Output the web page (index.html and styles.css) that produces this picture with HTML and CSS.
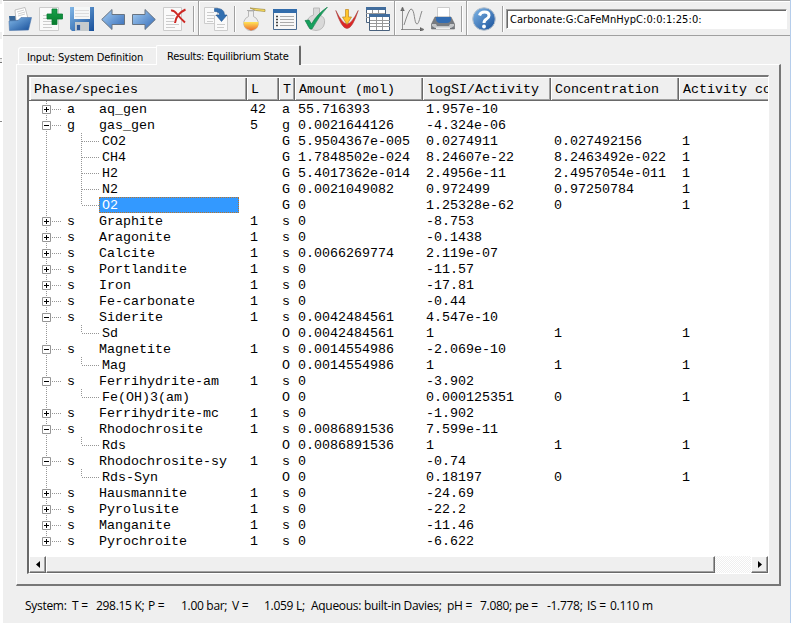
FILE: index.html
```html
<!DOCTYPE html>
<html lang="en">
<head>
<meta charset="utf-8">
<title>Equilibrium results</title>
<link rel="stylesheet" href="styles.css">
</head>
<body>
<div class="edge"><i class="e1"></i><i class="e2"></i><i class="e3"></i><i class="e4"></i></div>
<div class="window">
<header class="toolbar">
  <div class="group g1">
    <svg viewBox="0 0 24 24"><path d="M1 9h6l2-1h8l2 2v9H2z" fill="#376799"/><path d="M7 3l10-2.500 3 11-12 2z" fill="#fff" stroke="#aaa" stroke-width=".7"/><path d="M9 5l7-2M10 7l7-2M10 9l7-2" stroke="#bbb" stroke-width=".7"/><path d="M1 14l9-.5 3-3h10.500l-3 12.500-19 .5z" fill="url(#blue)" stroke="#4d76aa" stroke-width=".6"/></svg>
    <svg viewBox="0 0 24 24"><path d="M.5.5h19v23H.5z" fill="#fafafa" stroke="#ccc"/><path d="M4 8.500h5M4 11.500h9M4 14.500h9M4 17.500h12M4 20.500h9" stroke="#ccc"/><path d="M13 2h5v5h5.500v5H18v5.500h-5V12H8V7h5z" fill="url(#green)" stroke="#087b32" stroke-width=".8"/></svg>
    <svg viewBox="0 0 24 24"><path d="M0 0h24v24H2l-2-2z" fill="url(#blue)"/><path d="M4 0h16v12H4z" fill="#f5f7f7"/><path d="M5 3.500h14M5 6.500h14M5 9.500h14" stroke="#ddd"/><path d="M5 15h14v9H5z" fill="#c5cacc"/><path d="M6.500 17.500h4v6h-4z" fill="#315b99" stroke="#eee" stroke-width=".5"/></svg>
    <svg viewBox="0 0 24 24"><path d="M.7 12.500L11 2.500v5h12.500v10H11v5z" fill="url(#arrow)" stroke="#687482"/></svg>
    <svg viewBox="0 0 24 24"><path d="M23.300 12.500L13 2.500v5H.5v10H13v5z" fill="url(#arrow)" stroke="#687482"/></svg>
    <svg viewBox="0 0 24 24"><path d="M.5.5h18v23H.5z" fill="#fafafa" stroke="#ccc"/><path d="M3 8.500h9M3 11.500h8M3 14.500h8M3 17.500h13M3 20.500h9" stroke="#ccc"/><path d="M8 3.500q3-.5 6 3.500 4 5 8 8.500M22.500 2.500Q13 7 12 16" fill="none" stroke="#ce2824" stroke-width="2"/></svg>
    <b class="sep"></b>
  </div>
  <div class="group g2">
    <svg viewBox="0 0 24 24"><path d="M.5.500h13v16H.5z" fill="#fafafa" stroke="#ccc"/><path d="M10.500 8.500h13v15h-13z" fill="#fafafa" stroke="#ccc"/><path d="M3 5.500h7M3 8.500h7M3 11.500h7M3 14.500h6M13 17.500h8M13 20.500h7" stroke="#ccc"/><path d="M10.500 1.500q10-1 10 6.500h2.500l-5.500 6.500L12 8h3.500q0-3.500-5-3.500z" fill="#326fb0" stroke="#235894" stroke-width=".6"/></svg>
    <b class="sep"></b>
    <svg viewBox="0 0 24 24"><path d="M6.500 4v5.500a7.300 7.300 0 1 0 5 0V4z" fill="#eee" stroke="#aaa" stroke-width=".8"/><path d="M1.700 15h14.600q1 7-7.300 8.400Q1 22 1.700 15" fill="url(#orange)"/><path d="M5 3.500h8" stroke="#aaa"/><path d="M8 1l15 1.500v2l-9-1z" fill="#ffe15a" stroke="#9b8841" stroke-width=".7"/></svg>
    <svg viewBox="0 0 24 24"><path d="M.5 2.500h23v20H.5z" fill="#f7f7f7" stroke="#486a90"/><path d="M0 2h24v4H0z" fill="#326cab"/><path d="M3 9.500h2M3 12.500h2M3 15.500h2M3 18.500h2" stroke="#444" stroke-width="1.600"/><path d="M7 9.500h14M7 12.500h14M7 15.500h14M7 18.500h14" stroke="#aaa"/></svg>
    <svg viewBox="0 0 24 24"><path d="M9.500 1h6v7q6 2 5 8-1 7-8.500 7.500Q4 23 3 16q0-6 6.500-8z" fill="#d9d9d9" stroke="#bababa"/><path d="M1 13.500l4-.5 2.500 4Q13 7 23.500 0 15 9 8 22H6z" fill="#16a05d" stroke="#087842" stroke-width=".6"/></svg>
    <svg viewBox="0 0 24 24"><path d="M.8 3.500Q6.500 21.500 12 21.500T23.200 3.500Q16.500 17 12 17T.8 3.500" fill="#dd2525" stroke="#a74c48" stroke-width=".6"/><path d="M10.500 2.500h3v7.500h3L12 17.500 7.500 10h3z" fill="#ffc52d" stroke="#bd8622" stroke-width=".7"/></svg>
    <svg viewBox="0 0 24 24"><path d="M.5.500h19v15H.5z" fill="#fff" stroke="#49617d"/><path d="M0 0h20v3H0z" fill="#416d9d"/><path d="M6.500 3v12M12.500 3v12M0 6.500h19M0 10.500h19" stroke="#999"/><path d="M3.500 7.500h20v16h-20z" fill="#fff" stroke="#49617d"/><path d="M3 7h21v3H3z" fill="#416d9d"/><path d="M10.500 10v13M16.500 10v13M4 13.500h20M4 16.500h20M4 19.500h20" stroke="#999"/></svg>
  </div>
  <div class="group g3">
    <svg viewBox="0 0 24 24"><path d="M2.500 23V2M1 22.500h22M.7 4l1.800-4 1.800 4M20 20.500l4 2-4 2" fill="#555" stroke="#777" stroke-width=".8"/><path d="M4 18Q9 2 11 2c4 0 3 15 6 15 2 0 3-8 5-13" fill="none" stroke="#888"/></svg>
    <svg viewBox="0 0 24 24"><path d="M6.500.500h12V14h-12z" fill="#fff" stroke="#ccc"/><path d="M4 10h16l3.500 7v5h-23v-5z" fill="#777b80" stroke="#666" stroke-width=".6"/><path d="M5 10h15v3q-1 3-4 3H9q-3 0-4-3z" fill="#326cb2"/><path d="M1 17h4l1 2h12l1-2h4v2l-3 2H4l-3-2z" fill="#c4c6c8"/><path d="M5 20.500h14V22H5z" fill="#eee"/></svg>
    <b class="sep"></b>
  </div>
  <div class="group g4">
    <svg viewBox="0 0 24 24"><circle cx="12" cy="12" r="11.300" fill="url(#blue)" stroke="#b7c1cb"/><path d="M7.500 8.500q1-3.500 5-3.500 4.500 0 4.500 3.500 0 2-2.500 3.500T12 16" fill="none" stroke="#fff" stroke-width="3"/><circle cx="12" cy="19.500" r="1.900" fill="#fff"/></svg>
    <b class="sep"></b>
    <div class="field">Carbonate:G:CaFeMnHypC:0:0:1:25:0:</div>
  </div>
</header>
<svg class="defs"><defs>
  <linearGradient id="blue" x2="1" y2="1"><stop stop-color="#82b8e8"/><stop offset="1" stop-color="#164e99"/></linearGradient>
  <linearGradient id="arrow" x2="1" y2="1"><stop stop-color="#a7d0f5"/><stop offset="1" stop-color="#3269b6"/></linearGradient>
  <linearGradient id="green" x2="0" y2="1"><stop stop-color="#16a14b"/><stop offset="1" stop-color="#087b2d"/></linearGradient>
  <linearGradient id="orange" x2="0" y2="1"><stop stop-color="#ffe458"/><stop offset="1" stop-color="#ed6c2c"/></linearGradient>
</defs></svg>
<nav class="tabs"><div class="tab"><span>Input: System Definition</span></div><div class="tab active"><span>Results: Equilibrium State</span></div></nav>
<main class="panel">
  <div class="table">
    <div class="head"><span>Phase/species</span><span>L</span><span>T</span><span>Amount (mol)</span><span>logSI/Activity</span><span>Concentration</span><span>Activity coefficient</span></div>
    <div class="rows" id="rows"></div>
    <div class="scroll"><div class="arrow left"><svg viewBox="0 0 4 7"><path d="M4 0v7L0 3.500z"/></svg></div><div class="thumb"></div><div class="track"></div><div class="arrow"><svg viewBox="0 0 4 7"><path d="M0 0v7l4-3.500z"/></svg></div></div>
  </div>
</main>
<footer class="status"><span>System:</span><span>T =</span><span>298.15 K;</span><span>P =</span><span>1.00 bar;</span><span>V =</span><span>1.059 L;</span><span>Aqueous: built-in Davies;</span><span>pH =</span><span>7.080;</span><span>pe =</span><span>-1.778;</span><span>IS =</span><span>0.110 m</span></footer>
</div>
<script src="rows.js"></script>
</body>
</html>
```
FILE: styles.css
```css
* { box-sizing: border-box; }
body { margin: 0; width: 791px; height: 623px; overflow: hidden; background: #efefef; color: #000; display: flex; border-right: 1px solid #b5cdeb; font: 11px "DejaVu Sans Condensed", "DejaVu Sans", sans-serif; }
.edge { width: 3px; flex: none; border-right: 1px solid #fff; padding-top: 4px; display: flex; flex-direction: column; }
.edge i { height: 28px; background: #fff; width: 2px; }
.edge .e2 { margin-top: 7px; height: 20px; border-bottom: 1px solid #aaa; }
.edge .e3 { margin-top: 3px; height: 60px; border-top: 1px solid #777; border-bottom: 1px solid #888; }
.edge .e4 { height: 502px; border-top: 0; }
.window { width: 787px; flex: none; }
.toolbar { height: 36px; border-top: 1px solid #a0a0a0; border-bottom: 1px solid #a0a0a0; display: flex; box-shadow: inset 0 1px #fff; }
.toolbar svg { width: 24px; height: 24px; display: block; flex: none; }
.group { display: flex; gap: 7px; padding: 6px 0 0 5px; border-right: 1px solid #a0a0a0; box-shadow: inset 1px 1px #fff; }
.g1 { width: 196px; }
.g2 { width: 196px; }
.g3 { width: 72px; }
.g4 { flex: 1; border-right: 0; }
.sep { width: 2px; height: 26px; margin: -1px -1px 0; border-left: 1px solid #a0a0a0; border-right: 1px solid #fff; flex: none; }
.field { width: 281px; height: 20px; margin: 2px 0 0 -4px; padding-left: 3px; line-height: 20px; background: #fff; border: 1px solid; border-color: #a0a0a0 #fff #fff #a0a0a0; box-shadow: inset 1px 1px #696969; letter-spacing: .07px; white-space: nowrap; }
.defs { width: 0; height: 0; display: block; }
.tabs { display: flex; align-items: flex-end; height: 28px; padding-left: 15px; letter-spacing: -.17px; }
.tab { width: 138px; height: 17px; border: 1px solid #fff; border-width: 1px 0 0 1px; border-radius: 3px 0 0; line-height: 20px; padding-left: 8px; white-space: nowrap; }
.tab.active { width: 145px; height: 20px; border-right: 2px solid #696969; padding-left: 10px; border-radius: 2px 2px 0 0; line-height: 21px; margin-bottom: -1px; background: #efefef; z-index: 1; letter-spacing: -.23px; }
.panel { width: 765px; height: 522px; margin-left: 13px; padding: 10px 11px 11px; border: 1px solid #fff; border-right: 2px solid #777; border-bottom: 2px solid #777; }
.table { width: 742px; height: 499px; border: 2px solid #696969; border-top-color: #777; border-right: 1px solid #fff; border-bottom: 1px solid #fff; margin-left: -1px; padding-left: 1px; background: #fff; font: 13.333px "Liberation Mono", monospace; overflow: hidden; }
.head, .row { display: grid; grid-template-columns: 217px 32px 16px 128px 128px 128px 90px; white-space: pre; }
.head { height: 24px; margin-left: -1px; padding-left: 1px; background: #efefef; border-bottom: 1px solid #696969; overflow: hidden; }
.head span { padding-left: 3px; line-height: 24px; border-left: 1px solid #fff; border-top: 1px solid #fff; box-shadow: inset -1px 0 #696969, inset -2px -1px #a0a0a0; overflow: hidden; }
.head span:nth-child(3) { padding-left: 3px; }
.head span:last-child { box-shadow: inset 0 -1px #a0a0a0; }
.rows { height: 455px; }
.row { height: 16px; line-height: 18px; grid-auto-rows: 16px; }
.row > span { padding-left: 3px; }
.row .tree { padding: 0; display: flex; }
.guide { width: 32px; height: 16px; display: block; flex: none; }
.type { width: 31px; padding-left: 3px; margin-left: 2px; }
.name { width: 140px; height: 16px; padding-left: 3px; margin-left: 1px; }
.root .name { padding-left: 0; margin-left: 4px; }
.guide.sub { width: 69px; margin-right: -1px; }
.dot { stroke: #969696; stroke-dasharray: 1 1; fill: none; }
.box { fill: #fff; stroke: #969696; }
.mark { stroke: #000; fill: none; }
.selected .name { background: #3399ff; color: #fff; outline: 1px dotted #b8742a; outline-offset: -1px; }
.scroll { height: 17px; display: flex; background: #efefef; width: 739px; margin-left: -1px; }
.arrow { width: 17px; border: 1px solid #fff; border-right: 1px solid #696969; border-bottom: 1px solid #696969; box-shadow: inset -1px -1px #a0a0a0; display: flex; align-items: center; justify-content: center; }
.arrow svg { width: 4px; height: 7px; margin-bottom: 1px; }
.thumb { width: 669px; border: 1px solid #fff; border-right-color: #696969; border-bottom-color: #696969; box-shadow: inset -1px -1px #a0a0a0; }
.track { width: 36px; background: repeating-conic-gradient(#fff 0 25%, #efefef 0 50%) 0 0 / 2px 2px; }
.status { display: grid; grid-template-columns: 47px 24px 52px 33px 51px 32px 47px 136px 33px 35px 32px 40px 23px 60px; padding-left: 22px; margin-top: 12px; font: 12px/16px "Open Sans", sans-serif; letter-spacing: -.3px; white-space: nowrap; }
```
FILE: rows.js
```js
const data = `a|aq_gen|42|a|55.716393|1.957e-10
g-|gas_gen|5|g|0.0021644126|-4.324e-06
*|CO2||G|5.9504367e-005|0.0274911|0.027492156|1
*|CH4||G|1.7848502e-024|8.24607e-22|8.2463492e-022|1
*|H2||G|5.4017362e-014|2.4956e-11|2.4957054e-011|1
*|N2||G|0.0021049082|0.972499|0.97250784|1
*|O2||G|0|1.25328e-62|0|1
s|Graphite|1|s|0|-8.753
s|Aragonite|1|s|0|-0.1438
s|Calcite|1|s|0.0066269774|2.119e-07
s|Portlandite|1|s|0|-11.57
s|Iron|1|s|0|-17.81
s|Fe-carbonate|1|s|0|-0.44
s-|Siderite|1|s|0.0042484561|4.547e-10
*|Sd||O|0.0042484561|1|1|1
s-|Magnetite|1|s|0.0014554986|-2.069e-10
*|Mag||O|0.0014554986|1|1|1
s-|Ferrihydrite-am|1|s|0|-3.902
*|Fe(OH)3(am)||O|0|0.000125351|0|1
s|Ferrihydrite-mc|1|s|0|-1.902
s-|Rhodochrosite|1|s|0.0086891536|7.599e-11
*|Rds||O|0.0086891536|1|1|1
s-|Rhodochrosite-sy|1|s|0|-0.74
*|Rds-Syn||O|0|0.18197|0|1
s|Hausmannite|1|s|0|-24.69
s|Pyrolusite|1|s|0|-22.2
s|Manganite|1|s|0|-11.46
s|Pyrochroite|1|s|0|-6.622`.split('\n').map(line => line.split('|'));

document.getElementById('rows').innerHTML = data.map(([kind, name, ...cells], i) => {
  const child = kind === '*';
  const open = kind.endsWith('-');
  const more = data[i + 1] && data[i + 1][0] === '*';
  const end = i === data.length - 1 ? 8 : 16;
  const guide = child
    ? `<svg class="guide sub"><path class="dot" d="M16.500 0V16M51.500 0V${more ? 16 : 8}M52 8.500H69"/></svg>`
    : `<svg class="guide"><path class="dot" d="M16.500 0V${end}M22 8.500H32"/><path class="box" d="M12.500 4.500h8v8h-8z"/><path class="mark" d="M14 8.500h5${open ? '' : 'M16.500 6v5'}"/></svg>`;
  const type = child ? '' : `<span class="type">${kind[0]}</span>`;
  const cls = `row ${child ? 'child' : 'root'}${name === 'O2' ? ' selected' : ''}`;
  return `<div class="${cls}"><span class="tree">${guide}${type}<span class="name">${name}</span></span>${cells.map(c => `<span>${c}</span>`).join('')}</div>`;
}).join('');
```
